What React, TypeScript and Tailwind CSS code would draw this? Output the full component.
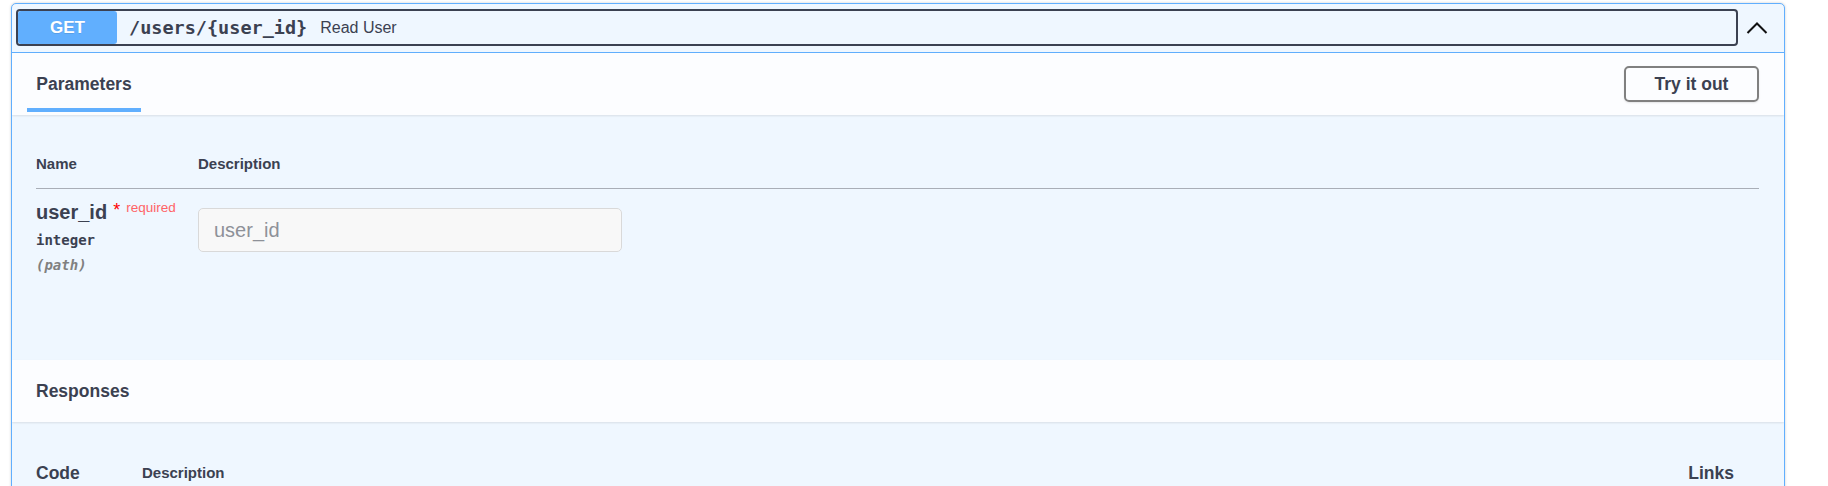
import React from 'react';

const SANS = "font-['Liberation_Sans',Arial,sans-serif]";
const MONO = "font-['DejaVu_Sans_Mono','Liberation_Mono',monospace]";

const ChevronUp = () => (
  <svg width="22" height="13" viewBox="0 0 22 13" fill="none">
    <path d="M1.5 12 L11 2.5 L20.5 12" stroke="#111" strokeWidth="2" />
  </svg>
);

const SectionHeader = ({ title, children }: { title: string; children?: React.ReactNode }) => (
  <div className="h-[62px] bg-[#fcfdff] shadow-[0_1px_2px_rgba(0,0,0,0.1)] flex justify-between relative z-10">
    {children}
    {!children && (
      <div className="pl-[24px] flex items-center">
        <h4 className="text-[17.5px] font-bold">{title}</h4>
      </div>
    )}
  </div>
);

const App = () => {
  return (
    <div className={`bg-white min-h-[486px] pt-[3px] pl-[11px] text-[#3b4151] ${SANS}`}>
      <div className="w-[1774px] border border-[#61affe] rounded-[5px] bg-[#eff7ff] shadow-[0_0_3px_rgba(0,0,0,0.19)] overflow-hidden">
        {/* summary */}
        <div className="flex items-start h-[49px] border-b border-[#61affe] pl-[4px] pt-[5px]">
          <div className="flex-1 flex items-center h-[37px] border-2 border-[#3b4151] rounded-[4px]">
            <span className="w-[99px] h-full bg-[#61affe] rounded-[3px] text-white font-bold text-[17px] flex items-center justify-center [text-shadow:0_1px_0_rgba(0,0,0,0.1)]">
              GET
            </span>
            <span className={`ml-[12px] text-[18.5px] font-semibold ${MONO}`}>
              /users/{'{user_id}'}
            </span>
            <span className="ml-[13px] text-[16px]">Read User</span>
          </div>
          <button className="w-[46px] h-[37px] flex items-center pl-[8px]">
            <ChevronUp />
          </button>
        </div>

        {/* parameters */}
        <SectionHeader title="Parameters">
          <div className="ml-[15px] w-[114px] flex flex-col items-center">
            <h4 className="mt-[20px] leading-[22px] text-[17.5px] font-bold">Parameters</h4>
            <div className="mt-[13px] h-[4px] w-full bg-[#61affe]" />
          </div>
          <button className="mt-[13px] mr-[25px] h-[36px] w-[135px] border-2 border-[#808080] rounded-[5px] text-[17.5px] font-bold shadow-[0_1px_2px_rgba(0,0,0,0.1)]">
            Try it out
          </button>
        </SectionHeader>

        <div className="h-[245px] pl-[24px] pr-[25px] pt-[39px]">
          <div className="flex text-[15px] font-bold leading-[20px] pb-[14px] border-b border-[#a9aeb7]">
            <div className="w-[162px]">Name</div>
            <div>Description</div>
          </div>
          <div className="flex">
            <div className="w-[162px] pt-[11px]">
              <div className="flex items-start">
                <span className="text-[20px] leading-[24px] font-semibold">user_id</span>
                <span className="ml-[6px] text-[18px] leading-[20px] text-[#ff0000]">*</span>
                <span className="ml-[6px] text-[13.5px] leading-[16px] text-[#ff6366]">required</span>
              </div>
              <div className={`mt-[7px] text-[14px] leading-[18px] font-bold ${MONO}`}>integer</div>
              <div className={`mt-[7px] text-[14px] leading-[18px] italic font-semibold text-[#808080] ${MONO}`}>(path)</div>
            </div>
            <div className="pt-[19px]">
              <input
                placeholder="user_id"
                className="w-[424px] h-[44px] bg-[#f8f8f8] border border-[#d9d9d9] rounded-[5px] px-[15px] text-[20px] placeholder:text-[#8e9198] outline-none"
              />
            </div>
          </div>
        </div>

        {/* responses */}
        <SectionHeader title="Responses" />
        <div className="h-[110px] pl-[24px] pr-[50px] pt-[40px]">
          <div className="flex items-center justify-between font-bold leading-[22px]">
            <div className="flex items-center">
              <div className="w-[106px] text-[17.5px]">Code</div>
              <div className="text-[15px]">Description</div>
            </div>
            <div className="text-[17.5px]">Links</div>
          </div>
        </div>
      </div>
    </div>
  );
};

export default App;
